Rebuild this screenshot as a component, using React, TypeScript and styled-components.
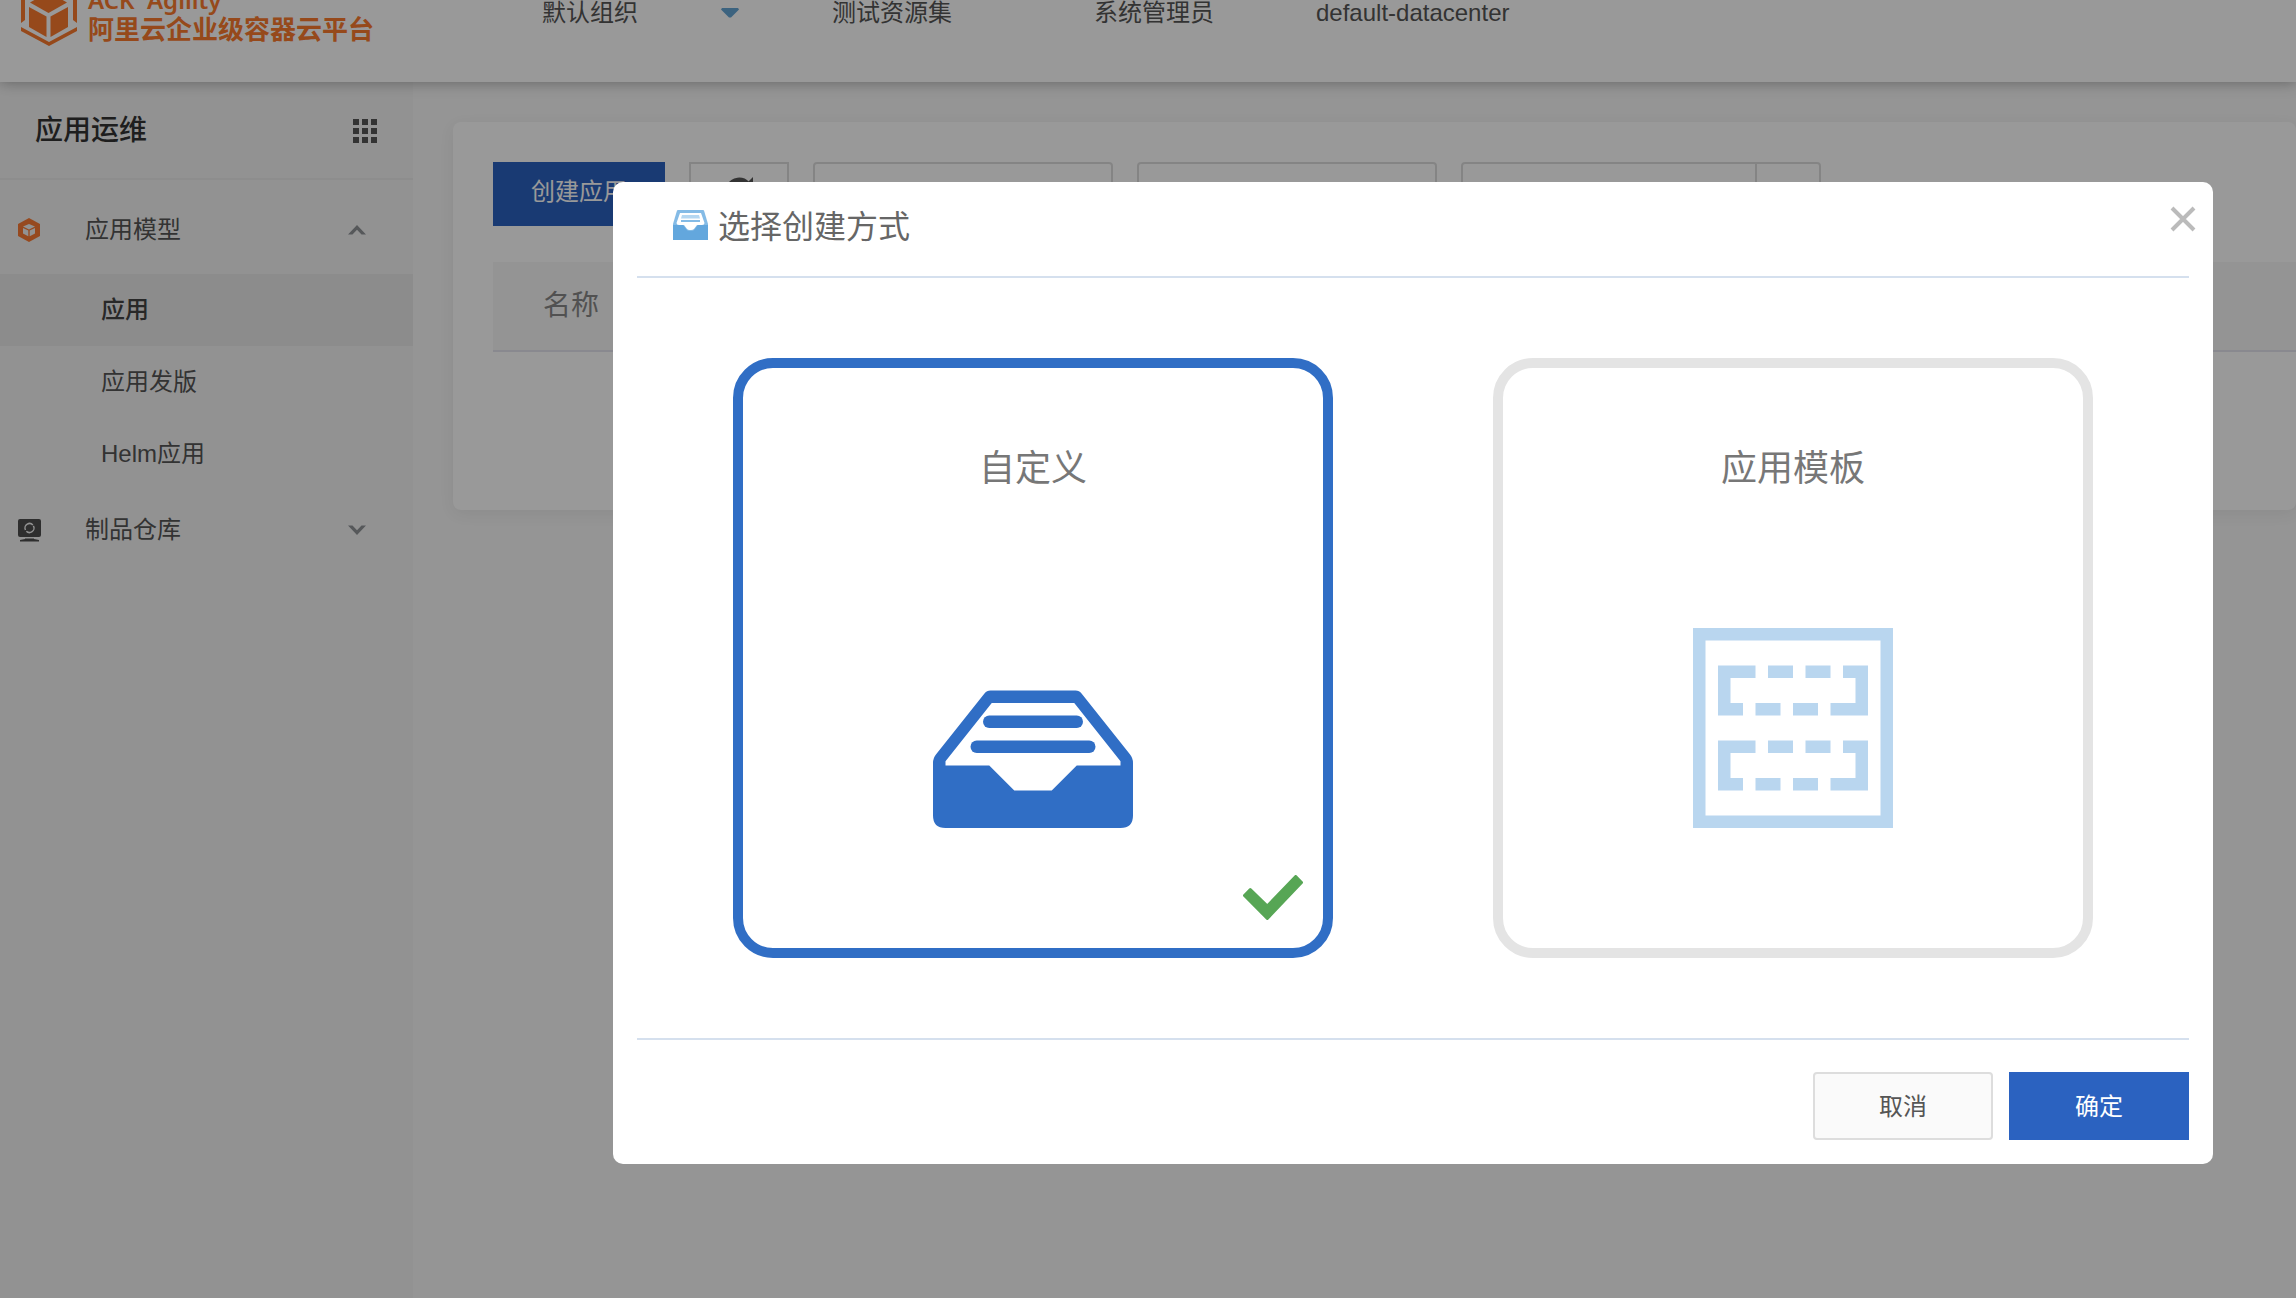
import React, { useState } from "react";
import styled, { createGlobalStyle, css } from "styled-components";

const GlobalStyle = createGlobalStyle`
  *, *::before, *::after { box-sizing: border-box; }
  body {
    margin: 0;
    background: #f8f8f8;
    color: #555;
    font-family: "Liberation Sans", "Noto Sans CJK SC", sans-serif;
    font-size: 24px;
    line-height: 24px;
  }
  button, input, select { font: inherit; color: inherit; margin: 0; }
`;

const Shell = styled.div`
  display: flex;
  flex-direction: column;
  min-height: 100vh;
`;

/* ---------- top bar ---------- */

const TopBar = styled.header`
  position: relative;
  z-index: 1;
  display: flex;
  height: 82px;
  overflow: hidden;
  background: #fff;
`;

const TopShadow = styled.div`
  position: relative;
  z-index: 1;
  box-shadow: 0 0 14px rgba(0, 0, 0, 0.35);
`;

const Brand = styled.a`
  display: flex;
  align-items: flex-end;
  align-self: flex-end;
  gap: 10px;
  width: 542px;
  padding: 0 0 36px 21px;
  color: #fa7a2e;
  text-decoration: none;
`;

const BrandText = styled.span`
  display: flex;
  flex-direction: column;
  font-weight: 700;
`;

const BrandName = styled.span`
  font: 600 24px/28px "Noto Sans", sans-serif;
  white-space: pre;
`;

const BrandSub = styled.span`
  font-size: 26px;
  line-height: 32px;
`;

const TopNav = styled.nav`
  display: flex;
  align-items: flex-start;
  line-height: 26px;
`;

const OrgSwitch = styled.button`
  display: flex;
  align-items: center;
  justify-content: space-between;
  width: 197px;
  padding: 0;
  border: 0;
  background: none;
`;

const TopList = styled.ul`
  display: flex;
  gap: 142px;
  margin: 0;
  padding: 0 0 0 93px;
  list-style: none;
`;

const TopItem = styled.li<{ $tight?: boolean }>`
  white-space: nowrap;
  margin-left: ${(p) => (p.$tight ? "-40px" : "0")};
`;

/* ---------- side bar ---------- */

const Columns = styled.div`
  display: flex;
  flex: 1;
`;

const Side = styled.aside`
  flex: none;
  width: 413px;
  background: #f4f4f4;
`;

const SideHead = styled.div`
  display: flex;
  align-items: center;
  justify-content: space-between;
  height: 98px;
  padding: 2px 35px 0;
  border-bottom: 2px solid #ebebeb;
`;

const SideTitle = styled.h2`
  margin: 0;
  color: #333;
  font-size: 28px;
  font-weight: 500;
  line-height: 40px;
`;

const IconButton = styled.button`
  display: flex;
  padding: 0;
  border: 0;
  background: none;
  color: #555;
`;

const SideNav = styled.nav`
  display: flex;
  flex-direction: column;
  gap: 4px;
  padding-top: 10px;
`;

const GroupButton = styled.button`
  display: grid;
  grid-template-columns: 67px 1fr 18px;
  align-items: center;
  width: 100%;
  height: 80px;
  padding: 0 47px 0 18px;
  border: 0;
  background: none;
  text-align: left;
`;

const SubList = styled.ul`
  margin: 0 0 -4px;
  padding: 0;
  list-style: none;
`;

const SubLink = styled.a<{ $active?: boolean }>`
  display: block;
  padding-left: 101px;
  line-height: 72px;
  color: #555;
  text-decoration: none;
  ${(p) =>
    p.$active &&
    css`
      background: #e9e9e9;
      color: #444;
      font-weight: 500;
    `}
`;

/* ---------- content ---------- */

const Content = styled.main`
  flex: 1;
  min-width: 0;
  padding: 40px 0 40px 40px;
`;

const Panel = styled.section`
  padding: 40px 0 40px 40px;
  border-radius: 8px;
  background: #fff;
  box-shadow: 0 4px 16px rgba(0, 0, 0, 0.06);
`;

const Toolbar = styled.div`
  display: flex;
  gap: 24px;
  height: 64px;
  margin-bottom: 36px;
`;

const CreateButton = styled.button`
  width: 172px;
  padding: 0 0 4px;
  border: 0;
  background: #2b62c0;
  color: #fff;
`;

const RefreshButton = styled.button`
  display: flex;
  justify-content: center;
  width: 100px;
  padding: 12px 0 0;
  border: 2px solid #ddd;
  background: #fff;
`;

const Field = styled.input`
  width: 300px;
  padding: 0 16px;
  border: 2px solid #ddd;
  border-radius: 4px;
  background: #fff;
`;

const SearchBox = styled.div`
  display: flex;
  width: 360px;
  border: 2px solid #ddd;
  border-radius: 4px;
`;

const SearchInput = styled.input`
  flex: 1;
  min-width: 0;
  padding: 0 16px;
  border: 0;
  background: none;
`;

const SearchButton = styled.button`
  width: 64px;
  border: 0;
  border-left: 2px solid #ddd;
  background: none;
`;

const Table = styled.table`
  width: 100%;
  border-spacing: 0;
`;

const HeadCell = styled.th`
  height: 90px;
  padding: 0 50px;
  border-bottom: 2px solid #e4e4ee;
  background: #f7f7f7;
  color: #888;
  font-size: 28px;
  font-weight: 400;
  text-align: left;
`;

const EmptyCell = styled.td`
  height: 118px;
`;

/* ---------- dialog ---------- */

const Backdrop = styled.div`
  position: fixed;
  inset: 0;
  z-index: 10;
  padding: 182px 83px 0 613px;
  background: rgba(0, 0, 0, 0.4);
`;

const Dialog = styled.section`
  position: relative;
  padding: 0 24px 24px;
  border-radius: 10px;
  background: #fff;
`;

const DialogHead = styled.header`
  display: flex;
  align-items: center;
  gap: 10px;
  height: 96px;
  padding: 0 36px 4px;
  border-bottom: 2px solid #d5e0ee;
`;

const DialogTitle = styled.h1`
  margin: 0;
  color: #666;
  font-size: 32px;
  font-weight: 400;
  line-height: 44px;
`;

const CloseButton = styled.button`
  position: absolute;
  top: 24px;
  right: 17px;
  display: flex;
  padding: 0;
  border: 0;
  background: none;
  color: #bbb;
`;

const Choices = styled.div`
  display: flex;
  justify-content: center;
  gap: 160px;
  padding: 80px 0;
`;

const Choice = styled.label<{ $on: boolean }>`
  position: relative;
  display: flex;
  flex-direction: column;
  align-items: center;
  justify-content: space-between;
  width: 600px;
  height: 600px;
  padding: 76px 0 120px;
  border: 10px solid ${(p) => (p.$on ? "#306ec5" : "#e4e4e4")};
  border-radius: 40px;
  color: ${(p) => (p.$on ? "#306ec5" : "#b9d6ef")};
  cursor: pointer;
`;

const ChoiceRadio = styled.input`
  position: absolute;
  opacity: 0;
`;

const ChoiceTitle = styled.span`
  color: #777;
  font-size: 36px;
  line-height: 50px;
`;

const Tick = styled.svg`
  position: absolute;
  right: 20px;
  bottom: 28px;
`;

const DialogFoot = styled.footer`
  display: flex;
  justify-content: flex-end;
  gap: 16px;
  padding-top: 32px;
  border-top: 2px solid #d5e0ee;
`;

const FootButton = styled.button<{ $primary?: boolean }>`
  width: 180px;
  height: 68px;
  padding: 2px 0 0;
  border: 2px solid #ddd;
  border-radius: 4px;
  background: #fafafa;
  color: #555;
  ${(p) =>
    p.$primary &&
    css`
      border: 0;
      border-radius: 0;
      background: #2b62c0;
      color: #fff;
    `}
`;

/* ---------- drawings ---------- */

const LogoMark = () => (
  <svg width="57" height="66" viewBox="21 -20 57 66" fill="currentColor" aria-hidden="true">
    <path d="M49 -20 77 -4V23L73 20V-1L49 -15 25 -1V20L21 23V-4Z" />
    <path d="M21 27 49 42 77 27V31L49 46 21 31Z" />
    <path d="M48.500 -8 67 2.500 48.500 13 30 2.500Z" />
    <path d="M29 7 46.500 16.500V37L29 27Z" />
    <path d="M68 7 50.500 16.500V37L68 27Z" />
  </svg>
);

const GridMark = () => (
  <svg width="25" height="26" viewBox="0 0 25 26" fill="currentColor" aria-hidden="true">
    {[0, 9, 18].map((y) =>
      [0, 9, 18].map((x) => <rect key={`${x}-${y}`} x={x} y={y + 1} width="6" height="6" />)
    )}
  </svg>
);

const CubeMark = () => (
  <svg width="22" height="24" viewBox="0 0 22 24" aria-hidden="true">
    <path d="M11 0 22 6V18L11 24 0 18V6Z" fill="#fa7b35" />
    <path d="M11 6 17 8.500 11 11.500 5 8.500Z" fill="#f4f4f4" />
    <path d="M5 10 10.300 12.500V18.200L5 15.500Z" fill="#f4f4f4" />
    <path d="M17 10 11.700 12.500V18.200L17 15.500Z" fill="#f4f4f4" />
  </svg>
);

const MonitorMark = () => (
  <svg width="23" height="23" viewBox="0 0 23 23" aria-hidden="true">
    <rect width="23" height="18" rx="2" fill="#4e4e4e" />
    <path d="M2 21 7 20V19.500H16V20L21 21V22.500H2Z" fill="#4e4e4e" />
    <circle cx="11.500" cy="9" r="4.500" fill="none" stroke="#f4f4f4" strokeWidth="1.500" strokeDasharray="12.500 1.600" transform="rotate(-30 11.500 9)" />
  </svg>
);

const Chevron = ({ up }: { up?: boolean }) => (
  <svg width="18" height="10" viewBox="0 0 18 10" fill="#8f9397" aria-hidden="true">
    <path d={up ? "M9 0 18 9.500H13.500L9 4.800 4.500 9.500H0Z" : "M9 10 18 .500H13.500L9 5.200 4.500 .500H0Z"} />
  </svg>
);

const Caret = () => (
  <svg width="18" height="10" viewBox="0 0 18 10" fill="#64a5d4" aria-hidden="true">
    <path d="M1 0H17L18 1.500 10 9.500H8L0 1.500Z" />
  </svg>
);

const RefreshMark = () => (
  <svg width="28" height="28" viewBox="0 0 28 28" aria-hidden="true">
    <path d="M22.500 7.500A11.500 11.500 0 1 0 25.500 14" fill="none" stroke="#555" strokeWidth="4.500" />
    <path d="M28 1V11.500H17.500Z" fill="#555" />
  </svg>
);

const trayBody =
  "M4.600 5H11.400Q11.700 5 11.900 5.250L15.750 10.100Q16 10.400 16 10.800V15Q16 16 15 16H1Q0 16 0 15V10.800Q0 10.400 .250 10.100L4.100 5.250Q4.300 5 4.600 5ZM4.700 6 1 10.650V11H4.500L6.500 13H9.500L11.500 11H15V10.650L11.300 6Z";

const TrayMark = () => (
  <svg width="200" height="200" viewBox="0 0 16 16" fill="currentColor" aria-hidden="true">
    <path fillRule="evenodd" d={trayBody} />
    <rect x="4" y="7" width="8" height="1" rx=".5" />
    <rect x="3" y="9" width="10" height="1" rx=".5" />
  </svg>
);

const SmallTrayMark = () => (
  <svg width="35" height="36" viewBox="0 0 35 36" aria-hidden="true">
    <path d="M4 1.500Q4.300 1 5 1H30Q30.700 1 31 1.500L35 15V31H0V15Z" fill="#84bbe6" />
    <path d="M7 4H28L31.500 14Q31.500 16 29 16H24L21 20Q20 21 18 21H16.500Q15 21 14 20L11 16H6Q3.500 16 3.500 14Z" fill="#fff" />
    <path d="M9 6H26L27 9.500H8Z" fill="#b5d7f1" />
    <path d="M8 11H27V13H8Z" fill="#84bbe6" />
    <path d="M0 16H10L13.500 20.500Q14.500 22 16.500 22H18Q20.500 22 21.500 20.500L25 16H35V31H0Z" fill="#63a7dd" />
  </svg>
);

const TemplateMark = () => (
  <svg width="200" height="200" viewBox="0 0 16 16" fill="currentColor" aria-hidden="true">
    <path fillRule="evenodd" d="M0 0H16V16H0ZM1 1V15H15V1Z" />
    {[3, 9].map((y) => (
      <path
        key={y}
        d={`M2 ${y}h3v1h-2v2h1v1h-2zM6 ${y}h2v1h-2zM9 ${y}h2v1h-2zM12 ${y}h2v4h-3v-1h2v-2h-1zM5 ${y + 3}h2v1h-2zM8 ${y + 3}h2v1h-2z`}
      />
    ))}
  </svg>
);

const CloseMark = () => (
  <svg width="26" height="26" viewBox="0 0 26 26" fill="none" stroke="currentColor" strokeWidth="4" aria-hidden="true">
    <path d="M2 2 24 24M24 2 2 24" />
  </svg>
);

const options = [
  { id: "custom", label: "自定义", Mark: TrayMark },
  { id: "template", label: "应用模板", Mark: TemplateMark },
];

export default function App() {
  const [picked, setPicked] = useState("custom");

  return (
    <>
      <GlobalStyle />
      <Shell>
        <TopShadow>
          <TopBar>
            <Brand href="#">
              <LogoMark />
              <BrandText>
                <BrandName>ACK{"  "}Agility</BrandName>
                <BrandSub>阿里云企业级容器云平台</BrandSub>
              </BrandText>
            </Brand>
            <TopNav>
              <OrgSwitch type="button">
                默认组织
                <Caret />
              </OrgSwitch>
              <TopList>
                <TopItem>测试资源集</TopItem>
                <TopItem>系统管理员</TopItem>
                <TopItem $tight>default-datacenter</TopItem>
              </TopList>
            </TopNav>
          </TopBar>
        </TopShadow>

        <Columns>
          <Side>
            <SideHead>
              <SideTitle>应用运维</SideTitle>
              <IconButton type="button" aria-label="菜单">
                <GridMark />
              </IconButton>
            </SideHead>
            <SideNav>
              <GroupButton type="button" aria-expanded="true">
                <CubeMark />
                应用模型
                <Chevron up />
              </GroupButton>
              <SubList>
                <li><SubLink href="#" $active>应用</SubLink></li>
                <li><SubLink href="#">应用发版</SubLink></li>
                <li><SubLink href="#">Helm应用</SubLink></li>
              </SubList>
              <GroupButton type="button" aria-expanded="false">
                <MonitorMark />
                制品仓库
                <Chevron />
              </GroupButton>
            </SideNav>
          </Side>

          <Content>
            <Panel>
              <Toolbar>
                <CreateButton type="button">创建应用</CreateButton>
                <RefreshButton type="button" aria-label="刷新">
                  <RefreshMark />
                </RefreshButton>
                <Field aria-label="集群" />
                <Field aria-label="命名空间" />
                <SearchBox>
                  <SearchInput type="search" aria-label="搜索" />
                  <SearchButton type="button" aria-label="搜索" />
                </SearchBox>
              </Toolbar>
              <Table>
                <thead>
                  <tr><HeadCell scope="col">名称</HeadCell></tr>
                </thead>
                <tbody>
                  <tr><EmptyCell /></tr>
                </tbody>
              </Table>
            </Panel>
          </Content>
        </Columns>
      </Shell>

      <Backdrop>
        <Dialog role="dialog" aria-modal="true" aria-labelledby="create-title">
          <DialogHead>
            <SmallTrayMark />
            <DialogTitle id="create-title">选择创建方式</DialogTitle>
            <CloseButton type="button" aria-label="关闭">
              <CloseMark />
            </CloseButton>
          </DialogHead>
          <Choices role="radiogroup" aria-labelledby="create-title">
            {options.map(({ id, label, Mark }) => (
              <Choice key={id} $on={picked === id}>
                <ChoiceRadio
                  type="radio"
                  name="create-mode"
                  checked={picked === id}
                  onChange={() => setPicked(id)}
                />
                <ChoiceTitle>{label}</ChoiceTitle>
                <Mark />
                {picked === id && (
                  <Tick width="60" height="45" viewBox="0 0 60 45" aria-hidden="true">
                    <path
                      d="M1.500 20.500 7.300 14.500 24.300 31 52.700 1.500 58.500 7.500 24.300 43.500Z"
                      fill="#57a655"
                      stroke="#57a655"
                      strokeWidth="3"
                      strokeLinejoin="round"
                    />
                  </Tick>
                )}
              </Choice>
            ))}
          </Choices>
          <DialogFoot>
            <FootButton type="button">取消</FootButton>
            <FootButton type="button" $primary>确定</FootButton>
          </DialogFoot>
        </Dialog>
      </Backdrop>
    </>
  );
}
